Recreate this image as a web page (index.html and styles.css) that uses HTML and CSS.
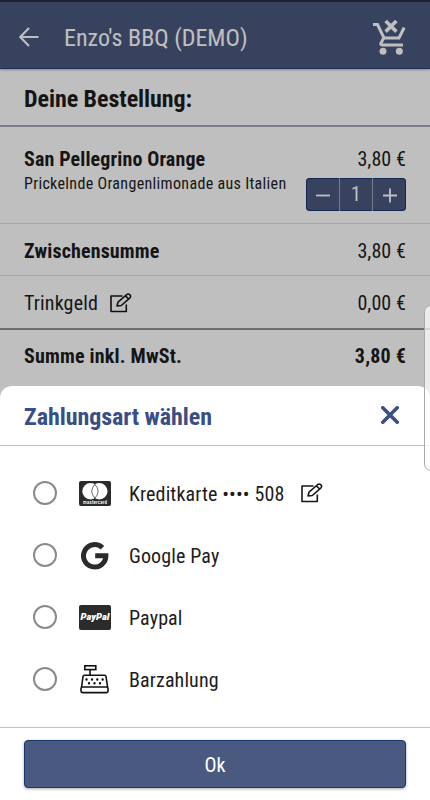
FILE: index.html
```html
<!DOCTYPE html>
<html lang="de">
<head>
    <meta charset="UTF-8">
    <meta name="viewport" content="width=device-width, initial-scale=1.0">
    <title>Enzo's BBQ (DEMO)</title>
    <link rel="stylesheet" href="styles.css">
</head>
<body>

    <div class="app">
        <header class="topbar">
            <svg class="back" width="20" height="20" viewBox="0 0 20 20">
                <path d="M19.5 10H1.5M10 1L1.2 10L10 19" />
            </svg>
            <h1>Enzo's BBQ (DEMO)</h1>
            <svg class="cart" width="34" height="36" viewBox="0 0 34 36">
                <path class="line" d="M1 5.5H5.5L12 19H27L32.2 8.5" />
                <path class="line" d="M12 18.5L8.8 24.5Q8.5 26 10.5 26H31" />
                <path class="cross" d="M13.6 2L24.4 12.6M24.4 2L13.6 12.6" />
                <circle cx="11" cy="32.2" r="3.5" />
                <circle cx="27.3" cy="32.2" r="3.5" />
            </svg>
        </header>

        <main class="order">
            <h2>Deine Bestellung:</h2>

            <div class="row item">
                <div class="item-text">
                    <div class="name">San Pellegrino Orange</div>
                    <div class="description">Prickelnde Orangenlimonade aus Italien</div>
                </div>
                <div class="item-side">
                    <div class="price">3,80 €</div>
                    <div class="stepper">
                        <button><svg width="16" height="16" viewBox="0 0 16 16"><path d="M1 8.5H15" /></svg></button>
                        <span>1</span>
                        <button><svg width="16" height="16" viewBox="0 0 16 16"><path d="M1 8.5H15M8 1.5V15.5" /></svg></button>
                    </div>
                </div>
            </div>

            <div class="row subtotal">
                <span class="name">Zwischensumme</span>
                <span class="price">3,80 €</span>
            </div>

            <div class="row tip">
                <span class="tip-label">Trinkgeld</span>
                <svg class="edit" width="22" height="20" viewBox="0 0 22 20">
                    <path d="M12.5 3H1V18.5H16.3V11.5" />
                    <path d="M7 13L8 9.2L16.8 1.5Q18.2 .4 19.7 1.7Q21.3 3.2 20 4.8L11.3 12.5Z" />
                    <path d="M15.4 2.9L18.6 6" />
                </svg>
                <span class="price">0,00 €</span>
            </div>

            <div class="row total">
                <span class="name">Summe inkl. MwSt.</span>
                <span class="price">3,80 €</span>
            </div>
        </main>

        <div class="backdrop"></div>

        <section class="sheet">
            <div class="sheet-header">
                <h2>Zahlungsart wählen</h2>
                <svg class="close" width="18" height="18" viewBox="0 0 18 18">
                    <path d="M1.8 1.8L16.2 16.2M16.2 1.8L1.8 16.2" />
                </svg>
            </div>

            <div class="options">
                <div class="option">
                    <span class="radio"></span>
                    <svg class="icon" width="32" height="32" viewBox="0 0 32 32">
                        <rect class="dark" x="0" y="4" width="32" height="25" rx="2" />
                        <circle class="white" cx="11.5" cy="14.3" r="8.2" />
                        <circle class="white" cx="20.3" cy="14.3" r="8.2" />
                        <path class="lens" d="M15.9 7.4Q9.5 14.3 15.9 21.2Q22.3 14.3 15.9 7.4Z" />
                        <text x="16" y="26.8" textLength="24" class="mastercard">mastercard</text>
                    </svg>
                    <span class="label">Kreditkarte •••• 508</span>
                    <svg class="edit" width="22" height="20" viewBox="0 0 22 20">
                        <path d="M12.5 3H1V18.5H16.3V11.5" />
                        <path d="M7 13L8 9.2L16.8 1.5Q18.2 .4 19.7 1.7Q21.3 3.2 20 4.8L11.3 12.5Z" />
                        <path d="M15.4 2.9L18.6 6" />
                    </svg>
                </div>
                <div class="option">
                    <span class="radio"></span>
                    <svg class="icon" width="32" height="32" viewBox="0 0 32 32">
                        <path class="google" d="M23.4 8.7A11.2 11.2 0 1 0 26.9 16.8H16.2" />
                    </svg>
                    <span class="label">Google Pay</span>
                </div>
                <div class="option">
                    <span class="radio"></span>
                    <svg class="icon" width="32" height="32" viewBox="0 0 32 32">
                        <rect class="dark" x="0" y="4" width="32" height="25" rx="2" />
                        <text x="16" y="18.8" textLength="29" lengthAdjust="spacingAndGlyphs" class="paypal">PayPal</text>
                    </svg>
                    <span class="label">Paypal</span>
                </div>
                <div class="option">
                    <span class="radio"></span>
                    <svg class="icon register" width="32" height="32" viewBox="0 0 32 32">
                        <rect x="5.8" y="2.8" width="11" height="3.8" />
                        <path d="M11 6.7V12" />
                        <path d="M2.6 24L4 13.5Q4.2 12.2 5.5 12.2H25.5Q26.8 12.2 27 13.5L28.6 24" />
                        <rect x="2" y="24" width="27" height="5.6" rx="1.5" />
                        <path class="keys" d="M7.5 16.5h0M13 16.5h0M18.3 16.5h0M23.6 16.5h0M10 20.3h0M15.5 20.3h0M21 20.3h0" />
                    </svg>
                    <span class="label">Barzahlung</span>
                </div>
            </div>

            <div class="sheet-footer">
                <button class="ok">Ok</button>
            </div>
        </section>

        <div class="edge-handle"></div>
    </div>

</body>
</html>
```
FILE: styles.css
```css
* {
    box-sizing: border-box;
}

body {
    margin: 0;
    font-family: "Roboto Condensed", Roboto, sans-serif;
    font-stretch: 75%;
    font-size: 20px;
    line-height: 24px;
    color: #1c1c1c;
}

h1, h2 {
    margin: 0;
}

svg {
    display: block;
    flex: none;
    fill: none;
}

button {
    padding: 0;
    border: 0;
    font: inherit;
    font-stretch: 75%;
    color: inherit;
    background: none;
}

.app {
    position: relative;
    width: 430px;
    height: 800px;
    overflow: hidden;
    background: #fff;
}

/* Order page */
.topbar {
    display: flex;
    align-items: center;
    height: 69px;
    padding: 4px 24px 0 19px;
    border-top: 2px solid #272e42;
    border-bottom: 1px solid #2b4080;
    background: #4a587f;
    color: #fff;
    box-shadow: 0 1px 2px rgba(0, 0, 0, 0.3);
}

.topbar h1 {
    flex: 1;
    margin-left: 25px;
    padding-top: 1px;
    font-size: 24px;
    font-weight: 400;
}

.back {
    stroke: #fff;
    stroke-width: 2.2;
}

.cart .line {
    stroke: #fff;
    stroke-width: 3;
}

.cart .cross {
    stroke: #fff;
    stroke-width: 3.6;
}

.cart circle {
    fill: #fff;
}

.order h2 {
    height: 58px;
    padding: 18px 24px 0;
    border-bottom: 2px solid #a3a8ba;
    font-size: 24px;
    font-weight: 700;
    letter-spacing: -0.05px;
}

.row {
    display: flex;
    align-items: center;
    padding: 0 24px;
    border-bottom: 1px solid #dedede;
}

.name {
    font-weight: 700;
    letter-spacing: 0.13px;
}

.price {
    margin-left: auto;
    letter-spacing: 0.1px;
}

.item {
    align-items: flex-start;
    height: 97px;
    padding-top: 20px;
}

.item-text {
    flex: 1;
}

.description {
    padding-top: 1px;
    font-size: 16px;
    letter-spacing: 0.33px;
}

.item-side {
    display: flex;
    flex-direction: column;
    gap: 7px;
}

.stepper {
    display: grid;
    grid-template-columns: 33px 34px 33px;
    height: 33px;
    border-radius: 4px;
    background: #4a587f;
    box-shadow: inset 0 0 0 1px #1b3672;
    color: #fff;
}

.stepper span {
    border: 1px solid #a3a8ba;
    border-width: 0 1px;
    text-align: center;
    line-height: 32px;
}

.stepper button {
    display: flex;
    align-items: center;
    justify-content: center;
}

.stepper path {
    stroke: #fff;
    stroke-width: 1.8;
}

.subtotal {
    height: 52px;
    padding-top: 2px;
}

.tip {
    height: 54px;
    padding-top: 1px;
    border-bottom: 2px solid #929292;
}

.tip-label {
    margin-right: 12px;
    letter-spacing: 0.15px;
}

.total {
    height: 52px;
    border-bottom: 0;
}

.total .name {
    letter-spacing: 0.18px;
}

.total .price {
    font-weight: 700;
    letter-spacing: 0.2px;
}

.edit {
    stroke: #161616;
    stroke-width: 1.6;
    stroke-linejoin: round;
}

.backdrop {
    position: absolute;
    inset: 0;
    background: rgba(0, 0, 0, 0.25);
}

/* Payment sheet */
.sheet {
    position: absolute;
    left: 0;
    right: 0;
    bottom: 0;
    height: 414px;
    border-radius: 12px 12px 0 0;
    background: #fff;
}

.sheet-header {
    display: flex;
    align-items: center;
    justify-content: space-between;
    height: 60px;
    padding: 0 31px 0 24px;
    border-bottom: 1px solid #c4c4c4;
}

.sheet-header h2 {
    padding-top: 2px;
    font-size: 24px;
    font-weight: 700;
    letter-spacing: -0.05px;
    color: #394e86;
}

.close {
    margin-bottom: 1px;
    stroke: #3b4f85;
    stroke-width: 3.6;
    stroke-linecap: round;
}

.options {
    height: 282px;
    padding: 16px 33px;
    border-bottom: 1px solid #c4c4c4;
}

.option {
    display: flex;
    align-items: center;
    height: 62px;
}

.radio {
    width: 24px;
    height: 24px;
    border: 2px solid #8a8a8a;
    border-radius: 50%;
}

.icon {
    margin: 0 18px 0 22px;
}

.label {
    margin-right: 17px;
    padding-top: 2px;
    letter-spacing: 0.13px;
}

.dark {
    fill: #2b2b2b;
}

.white {
    fill: #fff;
}

.lens {
    stroke: #2b2b2b;
    stroke-width: 0.7;
}

.mastercard {
    fill: #fff;
    font-size: 5px;
    font-weight: 500;
    text-anchor: middle;
}

.google {
    stroke: #2b2b2b;
    stroke-width: 5;
}

.paypal {
    fill: #fff;
    font-size: 9px;
    font-weight: 900;
    font-style: italic;
    font-stretch: 100%;
    text-anchor: middle;
}

.register {
    stroke: #111;
    stroke-width: 1.6;
}

.register .keys {
    stroke-width: 2.4;
    stroke-linecap: round;
}

.sheet-footer {
    padding: 12px 24px;
}

.ok {
    display: block;
    width: 100%;
    height: 48px;
    padding-top: 2px;
    border: 1px solid #1b3672;
    border-radius: 4px;
    background: #4a597f;
    box-shadow: 0 1px 3px rgba(0, 0, 0, 0.35);
    color: #fff;
}

/* Pull-out handle on the screen edge */
.edge-handle {
    position: absolute;
    top: 305px;
    right: -8px;
    width: 14px;
    height: 166px;
    border: 1px solid #aaa;
    border-radius: 7px;
    background: rgba(255, 255, 255, 0.7);
}
```
